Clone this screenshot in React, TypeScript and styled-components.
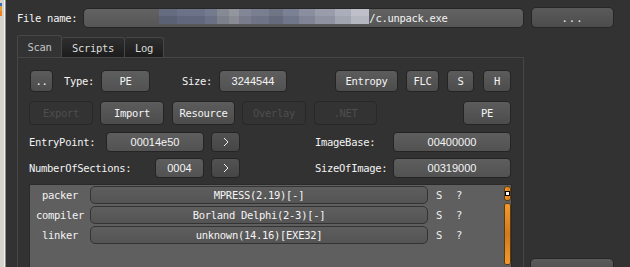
import React from 'react';
import styled, { createGlobalStyle } from 'styled-components';

const mono = `"DejaVu Sans Mono", "Liberation Mono", monospace`;
const sans = `"Liberation Sans", Arial, sans-serif`;

const GlobalStyle = createGlobalStyle`
  html, body {
    margin: 0;
    padding: 0;
    background: #323232;
  }
  * {
    box-sizing: border-box;
  }
`;

const Window = styled.div`
  display: flex;
  width: 630px;
  height: 267px;
  overflow: hidden;
  background: #323232;
  font-family: ${mono};
  font-size: 10.5px;
  letter-spacing: -0.3px;
  color: #f2f2f2;
`;

const Edge = styled.div`
  width: 6px;
  flex: none;
  background: linear-gradient(to right, #d6d3cc 0 4px, #f4f4f4 4px 5px, #8a8a8a 5px 6px);
`;

const EdgeIcon = styled.div`
  width: 2px;
  height: 13px;
  margin-top: 3px;
  background: linear-gradient(#3a6ac8 0 3px, #e0a040 3px 8px, #f08020 8px 13px);
`;

const Main = styled.div`
  flex: 1;
  display: flex;
  flex-direction: column;
  padding: 7px 0 0 11px;
`;

const TopRow = styled.div`
  display: flex;
  align-items: center;
  height: 21px;
`;

const Label = styled.div<{ $w?: number; $ml?: number }>`
  flex: none;
  width: ${p => (p.$w ? `${p.$w}px` : 'auto')};
  margin-left: ${p => p.$ml ?? 0}px;
  white-space: nowrap;
  color: #f2f2f2;
`;

const PathField = styled.div`
  width: 441px;
  height: 20px;
  display: flex;
  justify-content: center;
  align-items: center;
  background: linear-gradient(#626262, #565656);
  border: 1px solid #262626;
  border-radius: 5px;
  overflow: hidden;
  color: #f2f2f2;
`;

const Blur = styled.div`
  width: 210px;
  height: 15px;
  align-self: flex-start;
  background:
    linear-gradient(to bottom, rgba(255, 255, 255, 0.05) 0 7px, rgba(0, 0, 0, 0.03) 7px),
    linear-gradient(
      to right,
      #5d6478 0 18px,
      #646b82 18px 46px,
      #6e7488 46px 58px,
      #80848f 58px 70px,
      #8e9098 70px 80px,
      #7c8090 80px 92px,
      #72788a 92px 110px,
      #686e80 110px 124px,
      #747a8e 124px 140px,
      #84889a 140px 156px,
      #9498a6 156px 176px,
      #a6aab6 176px 192px,
      #babcc6 192px 210px
    );
`;

const Browse = styled.button`
  margin-left: 7px;
  width: 83px;
  height: 21px;
  padding: 0;
  background: linear-gradient(#5a5a5a, #4c4c4c);
  border: 1px solid #262626;
  border-radius: 5px;
  color: #f2f2f2;
  font: inherit;
  letter-spacing: 1px;
`;

const Body = styled.div`
  flex: 1;
  display: flex;
  margin-top: 7px;
`;

const Left = styled.div`
  width: 507px;
  display: flex;
  flex-direction: column;
`;

const Tabs = styled.div`
  display: flex;
  align-items: flex-end;
  height: 22px;
`;

const Tab = styled.div<{ $w: number; $active?: boolean }>`
  width: ${p => p.$w}px;
  height: ${p => (p.$active ? 22 : 20)}px;
  display: flex;
  align-items: center;
  justify-content: center;
  border: 1px solid #474747;
  border-bottom: none;
  border-left-width: ${p => (p.$active ? 1 : 0)}px;
  border-radius: 3px 3px 0 0;
  background: ${p => (p.$active ? '#333333' : 'linear-gradient(#2e2e2e, #1c1c1c)')};
  color: ${p => (p.$active ? '#c4c4c4' : '#dcdcdc')};
  padding-top: ${p => (p.$active ? 0 : 1)}px;
`;

const Panel = styled.div`
  flex: 1;
  display: flex;
  flex-direction: column;
  border: 1px solid #464646;
  border-bottom: none;
  padding: 12px 11px 0 11px;
`;

const Row = styled.div<{ $h: number; $mt?: number }>`
  display: flex;
  align-items: center;
  height: ${p => p.$h}px;
  margin-top: ${p => p.$mt ?? 0}px;
`;

const Btn = styled.button<{ $w: number; $ml?: number; $disabled?: boolean }>`
  flex: none;
  width: ${p => p.$w}px;
  height: 100%;
  margin-left: ${p => p.$ml ?? 0}px;
  padding: 0;
  border-radius: 4px;
  font: inherit;
  letter-spacing: inherit;
  border: 1px solid ${p => (p.$disabled ? '#282828' : '#242424')};
  background: ${p => (p.$disabled ? '#333333' : 'linear-gradient(#5c5c5c, #4c4c4c)')};
  color: ${p => (p.$disabled ? '#4e4e4e' : '#f4f4f4')};
`;

const Field = styled.div<{ $w: number; $ml?: number; $num?: boolean }>`
  flex: none;
  width: ${p => p.$w}px;
  height: 100%;
  margin-left: ${p => p.$ml ?? 0}px;
  display: flex;
  align-items: center;
  justify-content: center;
  border: 1px solid #242424;
  border-radius: 4px;
  background: linear-gradient(#5e5e5e, #525252);
  color: #f4f4f4;
  font-family: ${p => (p.$num ? sans : mono)};
  font-size: ${p => (p.$num ? 11 : 10.5)}px;
  letter-spacing: ${p => (p.$num ? 0 : -0.3)}px;
`;

const Arrow = styled(Btn)`
  display: flex;
  align-items: center;
  justify-content: center;
  background: linear-gradient(#525252, #464646);
`;

const List = styled.div`
  flex: 1;
  display: flex;
  margin-top: 6px;
  border: 1px solid #2a2a2a;
  border-bottom: none;
  background: #5f5f5f;
`;

const ListRows = styled.div`
  flex: 1;
  padding-top: 1px;
`;

const ListRow = styled.div`
  display: flex;
  align-items: center;
  height: 18px;
  margin-bottom: 2px;
`;

const ListLabel = styled.div`
  width: 60px;
  text-align: center;
  color: #f2f2f2;
`;

const ListValue = styled.div`
  width: 338px;
  height: 18px;
  display: flex;
  align-items: center;
  justify-content: center;
  border: 1px solid #333333;
  border-radius: 5px;
  background: linear-gradient(#5e5e5e, #545454);
  color: #f4f4f4;
`;

const Mark = styled.span<{ $ml: number }>`
  margin-left: ${p => p.$ml}px;
  color: #f2f2f2;
`;

const Scroll = styled.div`
  width: 7px;
  display: flex;
  flex-direction: column;
  gap: 2px;
  padding-top: 1px;
`;

const ScrollPart = styled.div<{ $h: number }>`
  height: ${p => p.$h}px;
  flex: none;
  display: flex;
  align-items: center;
  justify-content: center;
  border: 1px solid #5a3a10;
  border-radius: 3px;
  background: linear-gradient(to right, #f49a2c, #e88a1c 45%, #d07a1c 60%, #f49a2c);
`;

const ThumbCore = styled.div`
  width: 100%;
  height: 100%;
  border-radius: 2px;
  background: linear-gradient(#f49a2c, #d07a1e 50%, #f49a2c);
`;

const Dot = styled.div`
  width: 3px;
  height: 3px;
  background: #ffffff;
  outline: 1px solid #000000;
`;

const Right = styled.div`
  flex: 1;
  padding: 223px 0 0 6px;
`;

const SideBtn = styled.div`
  width: 84px;
  height: 20px;
  border: 1px solid #262626;
  border-radius: 5px;
  background: linear-gradient(#5a5a5a, #4c4c4c);
`;

const Chevron = () => (
  <svg width="8" height="10" viewBox="0 0 8 10">
    <path d="M2 1 L6 5 L2 9" fill="none" stroke="#f0f0f0" strokeWidth="1" />
  </svg>
);

const results = [
  { label: 'packer', value: 'MPRESS(2.19)[-]' },
  { label: 'compiler', value: 'Borland Delphi(2-3)[-]' },
  { label: 'linker', value: 'unknown(14.16)[EXE32]' },
];

export default function App() {
  return (
    <>
      <GlobalStyle />
      <Window>
        <Edge>
          <EdgeIcon />
        </Edge>
        <Main>
          <TopRow>
            <Label $w={66}>File name:</Label>
            <PathField>
              <Blur />
              <span>/c.unpack.exe</span>
            </PathField>
            <Browse>...</Browse>
          </TopRow>
          <Body>
            <Left>
              <Tabs>
                <Tab $w={45} $active>Scan</Tab>
                <Tab $w={63}>Scripts</Tab>
                <Tab $w={39}>Log</Tab>
              </Tabs>
              <Panel>
                <Row $h={22}>
                  <Btn $w={23} $ml={1}>..</Btn>
                  <Label $w={37} $ml={11}>Type:</Label>
                  <Field $w={49}>PE</Field>
                  <Label $w={37} $ml={32}>Size:</Label>
                  <Field $w={68} $num>3244544</Field>
                  <Btn $w={63} $ml={48}>Entropy</Btn>
                  <Btn $w={33} $ml={8}>FLC</Btn>
                  <Btn $w={27} $ml={8}>S</Btn>
                  <Btn $w={28} $ml={9}>H</Btn>
                </Row>
                <Row $h={24} $mt={9}>
                  <Btn $w={64} $disabled>Export</Btn>
                  <Btn $w={64} $ml={7}>Import</Btn>
                  <Btn $w={63} $ml={8}>Resource</Btn>
                  <Btn $w={64} $ml={7} $disabled>Overlay</Btn>
                  <Btn $w={63} $ml={8} $disabled>.NET</Btn>
                  <Btn $w={48} $ml={86}>PE</Btn>
                </Row>
                <Row $h={20} $mt={7}>
                  <Label $w={77}>EntryPoint:</Label>
                  <Field $w={98} $num>00014e50</Field>
                  <Arrow $w={29} $ml={7}><Chevron /></Arrow>
                  <Label $w={78} $ml={75}>ImageBase:</Label>
                  <Field $w={118} $num>00400000</Field>
                </Row>
                <Row $h={20} $mt={6}>
                  <Label $w={126}>NumberOfSections:</Label>
                  <Field $w={49} $num>0004</Field>
                  <Arrow $w={29} $ml={7}><Chevron /></Arrow>
                  <Label $w={78} $ml={75}>SizeOfImage:</Label>
                  <Field $w={118} $num>00319000</Field>
                </Row>
                <List>
                  <ListRows>
                    {results.map(r => (
                      <ListRow key={r.label}>
                        <ListLabel>{r.label}</ListLabel>
                        <ListValue>{r.value}</ListValue>
                        <Mark $ml={8}>S</Mark>
                        <Mark $ml={14}>?</Mark>
                      </ListRow>
                    ))}
                  </ListRows>
                  <Scroll>
                    <ScrollPart $h={15}><Dot /></ScrollPart>
                    <ScrollPart $h={62}><ThumbCore /></ScrollPart>
                    <ScrollPart $h={20} />
                  </Scroll>
                </List>
              </Panel>
            </Left>
            <Right>
              <SideBtn />
            </Right>
          </Body>
        </Main>
      </Window>
    </>
  );
}
